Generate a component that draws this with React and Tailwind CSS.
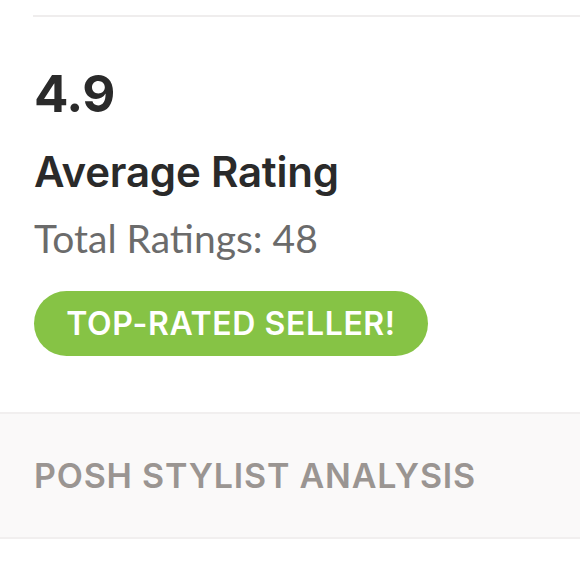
export default function App() {
  return (
    <div className="w-[580px] h-[580px] bg-white overflow-hidden" style={{ fontFamily: 'Inter, Lato, sans-serif' }}>
      <div className="pl-[33px] pt-[15px]">
        <div className="border-t-2 border-[#efeded]" />
        <div className="pl-px">
          <div className="mt-[51px] text-[51px] leading-none font-bold text-[#2a2a2a] tracking-[-0.5px]">4.9</div>
          <div className="mt-[32px] text-[42px] leading-none font-semibold text-[#2a2a2a] tracking-[-0.2px]">Average Rating</div>
          <div className="mt-[26px] text-[39px] leading-none text-[#6b6b6b] font-['Lato',sans-serif]">Total Ratings: 48</div>
          <div className="mt-[33px] flex">
            <span className="h-[65px] w-[394px] rounded-full bg-[#86c345] flex items-center justify-center text-white text-[32px] font-semibold tracking-[0.6px]">
              TOP-RATED SELLER!
            </span>
          </div>
        </div>
      </div>
      <div className="mt-[56px] h-[127px] bg-[#faf9f9] border-y-2 border-[#f1efef] flex items-center pl-[34px]">
        <span className="text-[34px] font-semibold text-[#9a9592] tracking-[0.8px]">POSH STYLIST ANALYSIS</span>
      </div>
    </div>
  )
}
